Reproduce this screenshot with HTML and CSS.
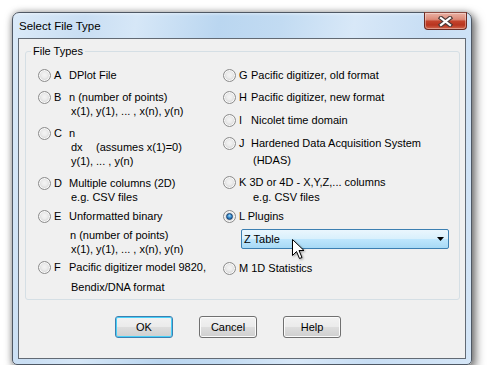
FILE: index.html
```html
<!DOCTYPE html>
<html>
<head>
<meta charset="utf-8">
<link rel="stylesheet" href="styles.css">
</head>
<body>
<div class="window">
  <div class="titlebar">
    <span class="title">Select File Type</span>
    <div class="close">
      <svg width="15" height="11" viewBox="0 0 15 11">
        <path d="M3 2 L12 9 M12 2 L3 9" stroke="#4a3a38" stroke-width="4.4" stroke-linecap="square" fill="none"/>
        <path d="M3 2 L12 9 M12 2 L3 9" stroke="#ffffff" stroke-width="2.2" stroke-linecap="square" fill="none"/>
      </svg>
    </div>
  </div>
  <div class="client">
    <fieldset class="group">
      <legend>File Types</legend>
      <div class="cols">
        <div class="col col-left">
          <div class="opt">
            <span class="radio"></span><span class="key">A</span>
            <div class="txt"><div>DPlot File</div></div>
          </div>
          <div class="opt mt8">
            <span class="radio"></span><span class="key">B</span>
            <div class="txt"><div>n (number of points)</div><div class="sub">x(1), y(1), ... , x(n), y(n)</div></div>
          </div>
          <div class="opt mt8">
            <span class="radio"></span><span class="key">C</span>
            <div class="txt"><div>n</div><div class="sub"><span class="dx">dx</span>(assumes x(1)=0)</div><div class="sub">y(1), ... , y(n)</div></div>
          </div>
          <div class="opt mt8">
            <span class="radio"></span><span class="key">D</span>
            <div class="txt"><div>Multiple columns (2D)</div><div class="sub">e.g. CSV files</div></div>
          </div>
          <div class="opt mt5">
            <span class="radio"></span><span class="key">E</span>
            <div class="txt"><div>Unformatted binary</div><div class="sub1 mt5">n (number of points)</div><div class="sub">x(1), y(1), ... , x(n), y(n)</div></div>
          </div>
          <div class="opt mt4">
            <span class="radio"></span><span class="key">F</span>
            <div class="txt"><div>Pacific digitizer model 9820,</div><div class="sub mt6">Bendix/DNA format</div></div>
          </div>
        </div>
        <div class="col col-right">
          <div class="opt">
            <span class="radio"></span><span class="key key-r">G</span>
            <div class="txt"><div>Pacific digitizer, old format</div></div>
          </div>
          <div class="opt mt8">
            <span class="radio"></span><span class="key key-r">H</span>
            <div class="txt"><div>Pacific digitizer, new format</div></div>
          </div>
          <div class="opt mt9">
            <span class="radio"></span><span class="key key-r">I</span>
            <div class="txt"><div>Nicolet time domain</div></div>
          </div>
          <div class="opt mt9">
            <span class="radio"></span><span class="key key-r">J</span>
            <div class="txt"><div>Hardened Data Acquisition System</div><div class="sub mt3">(HDAS)</div></div>
          </div>
          <div class="opt mt8">
            <span class="radio"></span>
            <div class="txt txt-r"><div>K 3D or 4D - X,Y,Z,... columns</div><div class="sub-k mt1">e.g. CSV files</div></div>
          </div>
          <div class="opt mt5">
            <span class="radio checked"></span>
            <div class="txt txt-r"><div>L Plugins</div></div>
          </div>
          <div class="combo">
            <span class="combo-text">Z Table</span>
            <svg class="combo-arrow" width="7" height="4" viewBox="0 0 7 4"><path d="M0 0 H7 L3.5 4 Z" fill="#000"/></svg>
            <svg class="cursor" width="13" height="21" viewBox="0 0 13 21">
              <path d="M0.5 0.5 L0.5 16.5 L4.5 12.5 L7.5 19.5 L10 18.5 L7 11.5 L12 11.5 Z" fill="#fff" stroke="#000" stroke-width="1" stroke-linejoin="miter"/>
            </svg>
          </div>
          <div class="opt mt12">
            <span class="radio"></span>
            <div class="txt txt-r"><div>M 1D Statistics</div></div>
          </div>
        </div>
      </div>
    </fieldset>
    <div class="buttons">
      <button class="btn btn-default">OK</button>
      <button class="btn">Cancel</button>
      <button class="btn">Help</button>
    </div>
  </div>
</div>
</body>
</html>
```

FILE: styles.css
```css
html, body {
  margin: 0;
  padding: 0;
  background: #ffffff;
}
body {
  font-family: "Liberation Sans", Arial, sans-serif;
  font-size: 11px;
  color: #000;
}
.window {
  margin: 12px 0 0 12px;
  width: 460px;
  height: 353px;
  box-sizing: border-box;
  border: 1px solid #4f5864;
  border-radius: 7px 7px 5px 5px;
  background:
    linear-gradient(180deg, rgba(255,255,255,0.35) 0px, rgba(255,255,255,0) 3px),
    linear-gradient(100deg, #dbeaf8 0%, #c9def3 14%, #d6e7f7 24%, #bad6f0 40%, #c2dbf2 52%, #d8e8f8 66%, #c8def4 80%, #d5e6f7 100%);
  box-shadow: 3px 4px 10px 1px rgba(0,0,0,0.5), 0 0 6px rgba(0,0,0,0.25);
  padding: 0 5px 5px 5px;
  display: flex;
  flex-direction: column;
}
.titlebar {
  margin: 0 -5px;
  height: 25px;
  display: flex;
  align-items: flex-start;
  padding: 0 4px 0 6px;
}
.title {
  font-family: "Liberation Sans", Arial, sans-serif;
  font-size: 11.5px;
  line-height: 16px;
  padding-top: 5px;
  color: #000;
}
.close {
  margin-left: auto;
  margin-top: -1px;
  width: 43px;
  height: 18px;
  box-sizing: border-box;
  border: 1px solid #6a2a22;
  border-top-color: #8a4a40;
  border-radius: 0 0 4px 4px;
  background: linear-gradient(180deg, #eab1a4 0%, #dc8a78 40%, #c3432c 52%, #b8341f 75%, #d2674e 100%);
  box-shadow: inset 0 0 0 1px rgba(255,255,255,0.35);
  display: flex;
  align-items: center;
  justify-content: center;
}
.close svg {
  display: block;
  margin-top: 0px;
}
.client {
  flex: 1;
  border: 1px solid #626a74;
  background: #f0f0f0;
  display: flex;
  flex-direction: column;
}
.group {
  margin: 6px 0 0 6px;
  width: 435px;
  box-sizing: border-box;
  border: 1px solid #d5dfe5;
  border-radius: 3px;
  padding: 10px 0 5px 0;
  min-width: 0;
}
.group legend {
  margin-left: 5px;
  padding: 0 2px;
  line-height: 13px;
  font-size: 11px;
}
.cols {
  display: flex;
  padding-left: 12px;
}
.col {
  display: flex;
  flex-direction: column;
}
.col-left {
  width: 185px;
}
.col-right {
  flex: 1;
}
.opt {
  display: flex;
  align-items: flex-start;
  line-height: 14px;
  white-space: nowrap;
}
.radio {
  flex: none;
  width: 13px;
  height: 13px;
  margin-top: 1px;
  box-sizing: border-box;
  border-radius: 50%;
  border: 1px solid #8c8c8c;
  background: radial-gradient(circle at 50% 45%, #f4f4f4 0, #ececec 35%, #d4d4d4 70%, #e9e9e9 100%);
  box-shadow: inset 0 0 0 1px #fafafa;
  position: relative;
}
.radio.checked::after {
  content: "";
  position: absolute;
  left: 2px;
  top: 2px;
  width: 7px;
  height: 7px;
  box-sizing: border-box;
  border-radius: 50%;
  border: 1px solid #163f6e;
  background: radial-gradient(circle at 50% 35%, #a6dcf8 0, #3a8ed0 45%, #0e4d8e 100%);
}
.key {
  flex: none;
  width: 15px;
  margin-left: 3px;
}
.key-r {
  width: 12px;
}
.txt-r {
  margin-left: 3px;
}
.sub {
  padding-left: 2px;
}
.sub1 {
  padding-left: 1px;
}
.sub-k {
  padding-left: 14px;
}
.dx {
  display: inline-block;
  width: 25px;
}
.mt1 { margin-top: 1px; }
.mt3 { margin-top: 3px; }
.mt4 { margin-top: 4px; }
.mt5 { margin-top: 5px; }
.mt6 { margin-top: 6px; }
.mt8 { margin-top: 8px; }
.mt9 { margin-top: 9px; }
.mt12 { margin-top: 12px; }
.combo {
  position: relative;
  margin-top: 6px;
  margin-left: 18px;
  width: 208px;
  height: 20px;
  box-sizing: border-box;
  border: 1px solid #3c7fb1;
  border-radius: 2px;
  background: linear-gradient(180deg, #eaf6fd 0%, #d9f0fc 48%, #bee6fd 52%, #a7d9f5 100%);
  display: flex;
  align-items: center;
  padding-left: 2px;
  line-height: 14px;
}
.combo-text {
  flex: 1;
}
.combo-arrow {
  display: block;
  margin-right: 4px;
}
.cursor {
  position: absolute;
  left: 50px;
  top: 9px;
  filter: drop-shadow(1px 1px 1px rgba(0,0,0,0.35));
}
.buttons {
  display: flex;
  gap: 26px;
  margin-top: 16px;
  padding-left: 96px;
}
.btn {
  width: 58px;
  height: 22px;
  box-sizing: border-box;
  border: 1px solid #707070;
  border-radius: 3px;
  background: linear-gradient(180deg, #f2f2f2 0%, #ebebeb 48%, #dddddd 52%, #cfcfcf 100%);
  box-shadow: inset 0 0 0 1px #fbfbfb;
  font-family: "Liberation Sans", Arial, sans-serif;
  font-size: 11px;
  color: #000;
  padding: 0;
  line-height: 14px;
}
.btn-default {
  border-color: #3c7fb1;
  box-shadow: inset 0 0 0 1px #48d0f8;
}
```
